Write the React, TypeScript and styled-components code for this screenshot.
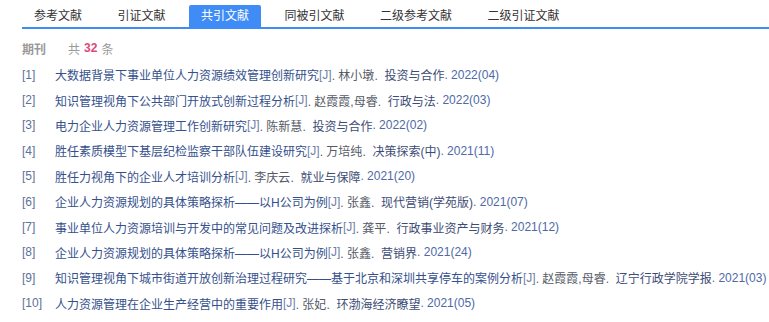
import React, { FC, useState } from 'react';
import styled, { createGlobalStyle } from 'styled-components';

const GlobalStyle = createGlobalStyle`
    html, body {
        margin: 0;
        padding: 0;
        background: #ffffff;
    }
    body {
        font-family: "Liberation Sans", Arial, "Noto Sans CJK SC", sans-serif;
        font-size: 12px;
    }
`;

const Page = styled.div`
    width: 769px;
    height: 322px;
    overflow: hidden;
    padding: 5px 0 0 22px;
    box-sizing: border-box;
`;

const TabBar = styled.div`
    display: flex;
    gap: 11.5px;
    border-bottom: 2px solid #3f8cf7;
    height: 22px;
`;

const Tab = styled.div<{ $active?: boolean }>`
    height: 22px;
    line-height: 23px;
    padding: 0 12px;
    border-radius: 2px 2px 0 0;
    font-size: 12px;
    color: ${(p) => (p.$active ? '#ffffff' : '#333333')};
    background: ${(p) => (p.$active ? '#3f8cf7' : 'transparent')};
    cursor: pointer;
    white-space: nowrap;
`;

const Summary = styled.div`
    display: flex;
    align-items: center;
    height: 20px;
    margin-top: 9px;
    font-size: 12px;
    color: #999999;

    .label {
        font-weight: bold;
        width: 46px;
    }

    .count {
        color: #e0487a;
        font-weight: bold;
        margin: 0 4px;
    }
`;

const List = styled.ol`
    list-style: none;
    margin: 4px 0 0 0;
    padding: 0;
`;

const Row = styled.li`
    display: flex;
    align-items: center;
    height: 25.4px;
    white-space: nowrap;
    font-size: 12px;

    .idx {
        width: 33px;
        flex: 0 0 33px;
        color: #5d7199;
    }
    .title {
        color: #35508c;
    }
    .type {
        color: #6f80a6;
    }
    .author {
        color: #555a66;
    }
    .journal {
        color: #3d4c75;
    }
    .year {
        color: #4e69a6;
    }
`;

type Ref = {
    title: string;
    author: string;
    journal: string;
    year: string;
};

const tabs = ['参考文献', '引证文献', '共引文献', '同被引文献', '二级参考文献', '二级引证文献'];

const refs: Ref[] = [
    { title: '大数据背景下事业单位人力资源绩效管理创新研究', author: '林小墩', journal: '投资与合作', year: '2022(04)' },
    { title: '知识管理视角下公共部门开放式创新过程分析', author: '赵霞霞,母睿', journal: '行政与法', year: '2022(03)' },
    { title: '电力企业人力资源管理工作创新研究', author: '陈新慧', journal: '投资与合作', year: '2022(02)' },
    { title: '胜任素质模型下基层纪检监察干部队伍建设研究', author: '万培纯', journal: '决策探索(中)', year: '2021(11)' },
    { title: '胜任力视角下的企业人才培训分析', author: '李庆云', journal: '就业与保障', year: '2021(20)' },
    { title: '企业人力资源规划的具体策略探析——以H公司为例', author: '张鑫', journal: '现代营销(学苑版)', year: '2021(07)' },
    { title: '事业单位人力资源培训与开发中的常见问题及改进探析', author: '龚平', journal: '行政事业资产与财务', year: '2021(12)' },
    { title: '企业人力资源规划的具体策略探析——以H公司为例', author: '张鑫', journal: '营销界', year: '2021(24)' },
    { title: '知识管理视角下城市街道开放创新治理过程研究——基于北京和深圳共享停车的案例分析', author: '赵霞霞,母睿', journal: '辽宁行政学院学报', year: '2021(03)' },
    { title: '人力资源管理在企业生产经营中的重要作用', author: '张妃', journal: '环渤海经济瞭望', year: '2021(05)' },
];

const App: FC = () => {
    const [active, setActive] = useState(2);

    return (
        <>
            <GlobalStyle />
            <Page>
                <TabBar>
                    {tabs.map((t, i) => (
                        <Tab key={t} $active={i === active} onClick={() => setActive(i)}>
                            {t}
                        </Tab>
                    ))}
                </TabBar>
                <Summary>
                    <span className="label">期刊</span>
                    共<span className="count">32</span>条
                </Summary>
                <List>
                    {refs.map((r, i) => (
                        <Row key={i}>
                            <span className="idx">[{i + 1}]</span>
                            <span className="title">{r.title}</span>
                            <span className="type">[J]</span>
                            <span className="author">.&nbsp;{r.author}.&nbsp;&nbsp;</span>
                            <span className="journal">{r.journal}</span>
                            <span className="year">.&nbsp;{r.year}</span>
                        </Row>
                    ))}
                </List>
            </Page>
        </>
    );
};

export default App;
